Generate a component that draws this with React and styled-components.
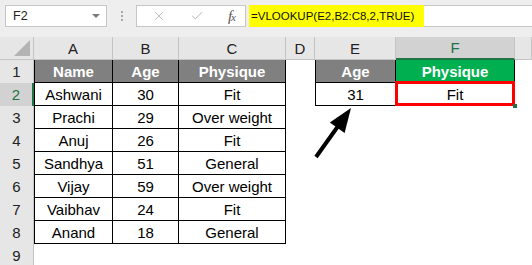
import React from 'react';
import styled, { createGlobalStyle, css } from 'styled-components';
import { X, Check } from 'lucide-react';

const GlobalStyle = createGlobalStyle`
  body {
    margin: 0;
    background: #fff;
    font-family: 'Liberation Sans', Arial, sans-serif;
  }
`;

const Page = styled.div`
  position: relative;
  width: 532px;
  height: 265px;
  overflow: hidden;
  background: #fff;
`;

const TopBar = styled.div`
  display: flex;
  align-items: center;
  height: 37px;
  padding: 5px 0 10px 5px;
  box-sizing: border-box;
  background: #eeeeee;
`;

const NameBox = styled.div`
  display: flex;
  align-items: center;
  justify-content: space-between;
  width: 102px;
  height: 22px;
  box-sizing: border-box;
  padding: 0 6px 0 7px;
  background: #fff;
  border: 1px solid #c6c6c6;
  font-size: 12.5px;
  color: #222;
`;

const Caret = styled.span`
  width: 0;
  height: 0;
  border-left: 4px solid transparent;
  border-right: 4px solid transparent;
  border-top: 4px solid #7a7a7a;
`;

const Grip = styled.div`
  display: flex;
  flex-direction: column;
  gap: 2px;
  margin: 0 13px 0 14px;

  span {
    width: 2px;
    height: 2px;
    background: #a8a8a8;
  }
`;

const FnBox = styled.div`
  display: flex;
  align-items: center;
  justify-content: space-between;
  width: 110px;
  height: 22px;
  box-sizing: border-box;
  padding: 0 10px 0 15px;
  background: #fff;
  border: 1px solid #c6c6c6;
  color: #b0b0b0;
`;

const Fx = styled.span`
  font-family: 'Liberation Serif', 'Times New Roman', serif;
  font-style: italic;
  font-size: 15px;
  color: #555;
  letter-spacing: -1px;

  small {
    font-size: 11px;
  }
`;

const FormulaBox = styled.div`
  flex: 1;
  height: 22px;
  margin-left: 3px;
  box-sizing: border-box;
  background: #fff;
  border: 1px solid #c6c6c6;
  border-right: none;
  display: flex;
`;

const Highlight = styled.span`
  display: flex;
  align-items: center;
  width: 175px;
  margin: -1px 0 -1px -1px;
  padding-left: 2px;
  box-sizing: border-box;
  background: #ffff00;
  font-size: 11.5px;
  color: #111;
`;

const Sheet = styled.div`
  display: grid;
  grid-template-columns: 34px 79px 66px 107px 29px 81px 119px 1fr;
  grid-auto-rows: 23px;
`;

const Corner = styled.div`
  position: relative;
  background: #e6e6e6;
  border-right: 1px solid #c4c4c4;
  border-bottom: 1px solid #c4c4c4;

  &::after {
    content: '';
    position: absolute;
    right: 3px;
    bottom: 3px;
    border-left: 16px solid transparent;
    border-bottom: 16px solid #b4b4b4;
  }
`;

const ColHead = styled.div`
  display: flex;
  align-items: center;
  justify-content: center;
  box-sizing: border-box;
  background: ${(p) => (p.$active ? '#d2d2d2' : '#e6e6e6')};
  border-right: 1px solid #c4c4c4;
  border-bottom: ${(p) => (p.$active ? '2px solid #217346' : '1px solid #c4c4c4')};
  font-size: 15px;
  color: ${(p) => (p.$active ? '#217346' : '#222')};
`;

const RowHead = styled.div`
  display: flex;
  align-items: center;
  justify-content: center;
  box-sizing: border-box;
  background: ${(p) => (p.$active ? '#d2d2d2' : '#e6e6e6')};
  border-right: ${(p) => (p.$active ? '2px solid #217346' : '1px solid #c4c4c4')};
  font-size: 15px;
  color: ${(p) => (p.$active ? '#217346' : '#222')};
`;

const fills = { gray: '#808080', green: '#00b050' };

const Cell = styled.div`
  position: relative;
  display: flex;
  align-items: center;
  justify-content: center;
  box-sizing: border-box;
  font-size: 15px;
  color: #000;
  white-space: nowrap;
  background: ${(p) => (p.$fill ? fills[p.$fill] : '#fff')};

  ${(p) => p.$fill && css`
    color: #fff;
    font-weight: bold;
  `}

  ${(p) => p.$box && css`
    border-right: 1px solid #000;
    border-bottom: 1px solid #000;
  `}

  ${(p) => p.$left && css`
    border-left: 1px solid #000;
  `}

  ${(p) => p.$mark && css`
    &::after {
      content: '';
      position: absolute;
      inset: -2px -1px -1px -1px;
      border: 3px solid #ff0000;
    }
    &::before {
      content: '';
      position: absolute;
      right: -3px;
      bottom: -3px;
      width: 4px;
      height: 4px;
      background: #217346;
      z-index: 1;
    }
  `}
`;

const Arrow = styled.svg`
  position: absolute;
  left: 0;
  top: 0;
  pointer-events: none;
`;

// G is only a sliver at the right edge, so its letter is cut off
const columns = ['A', 'B', 'C', 'D', 'E', 'F', 'G'];

const people = [
  ['Ashwani', 30, 'Fit'],
  ['Prachi', 29, 'Over weight'],
  ['Anuj', 26, 'Fit'],
  ['Sandhya', 51, 'General'],
  ['Vijay', 59, 'Over weight'],
  ['Vaibhav', 24, 'Fit'],
  ['Anand', 18, 'General'],
];

// value and style of one cell, by row number and column letter
function cellAt(row, col) {
  const inTable = 'ABC'.includes(col) && row <= 8;
  const inLookup = 'EF'.includes(col) && row <= 2;

  if (inTable) {
    const i = 'ABC'.indexOf(col);
    if (row === 1) {
      return { text: ['Name', 'Age', 'Physique'][i], fill: 'gray', box: true, left: col === 'A' };
    }
    return { text: people[row - 2][i], box: true, left: col === 'A' };
  }

  if (inLookup) {
    if (row === 1) {
      return col === 'E'
        ? { text: 'Age', fill: 'gray', box: true, left: true }
        : { text: 'Physique', fill: 'green', box: true };
    }
    return col === 'E'
      ? { text: 31, box: true, left: true }
      : { text: 'Fit', box: true, mark: true };
  }

  return { text: '' };
}

export default function App() {
  const rows = [1, 2, 3, 4, 5, 6, 7, 8, 9];

  return (
    <Page>
      <GlobalStyle />
      <TopBar>
        <NameBox>
          F2
          <Caret />
        </NameBox>
        <Grip>
          <span />
          <span />
          <span />
        </Grip>
        <FnBox>
          <X size={14} strokeWidth={1.4} />
          <Check size={14} strokeWidth={1.6} />
          <Fx>
            f<small>x</small>
          </Fx>
        </FnBox>
        <FormulaBox>
          <Highlight>=VLOOKUP(E2,B2:C8,2,TRUE)</Highlight>
        </FormulaBox>
      </TopBar>

      <Sheet>
        <Corner />
        {columns.map((c) => (
          <ColHead key={c} $active={c === 'F'}>
            {c === 'G' ? '' : c}
          </ColHead>
        ))}
        {rows.map((r) => (
          <React.Fragment key={r}>
            <RowHead $active={r === 2}>{r}</RowHead>
            {columns.map((c) => {
              const cell = cellAt(r, c);
              return (
                <Cell
                  key={c}
                  $fill={cell.fill}
                  $box={cell.box}
                  $left={cell.left}
                  $mark={cell.mark}
                >
                  {cell.text}
                </Cell>
              );
            })}
          </React.Fragment>
        ))}
      </Sheet>

      <Arrow width="532" height="265" viewBox="0 0 532 265">
        <line x1="316" y1="157" x2="341" y2="122" stroke="#000" strokeWidth="4" />
        <polygon points="351,108 344.6,133 329.8,122.5" fill="#000" />
      </Arrow>
    </Page>
  );
}
